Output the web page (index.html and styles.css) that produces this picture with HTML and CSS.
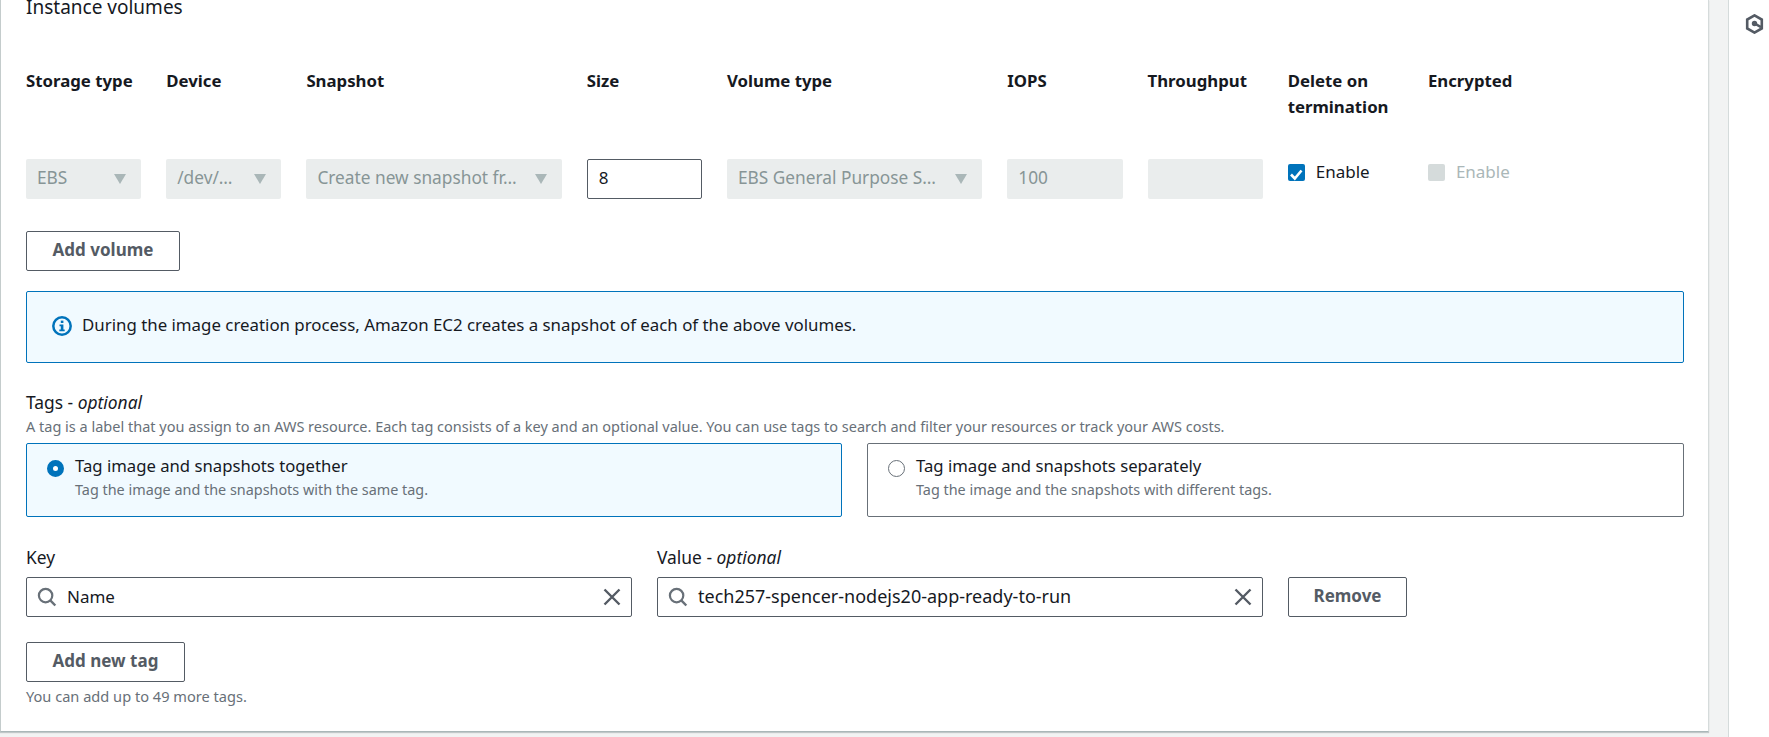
FILE: index.html
```html
<!DOCTYPE html>
<html>
<head>
  <meta charset="utf-8">
  <title>Instance volumes</title>
  <link rel="stylesheet" href="styles.css">
</head>
<body>
  <div class="page">
    <div class="main">
      <div class="card">
        <div class="card-title">Instance volumes</div>

        <!-- volume table -->
        <div class="vol-grid vol-head">
          <div>Storage type</div>
          <div>Device</div>
          <div class="wide">Snapshot</div>
          <div>Size</div>
          <div class="wide">Volume type</div>
          <div>IOPS</div>
          <div>Throughput</div>
          <div>Delete on termination</div>
          <div>Encrypted</div>
        </div>
        <div class="vol-grid vol-row">
          <div class="select"><span class="select-text">EBS</span><span class="arrow"></span></div>
          <div class="select"><span class="select-text">/dev/…</span><span class="arrow"></span></div>
          <div class="select wide"><span class="select-text">Create new snapshot fr…</span><span class="arrow"></span></div>
          <div class="field">8</div>
          <div class="select wide"><span class="select-text">EBS General Purpose S…</span><span class="arrow"></span></div>
          <div class="select"><span class="select-text">100</span></div>
          <div class="select"></div>
          <label class="check">
            <span class="box box-on">
              <svg width="17" height="17" viewBox="0 0 17 17"><path d="M3 8.500l3.800 4L13.500 4.500" fill="none" stroke="#fff" stroke-width="2.600"/></svg>
            </span>
            Enable
          </label>
          <label class="check check-off"><span class="box box-off"></span>Enable</label>
        </div>

        <button class="btn btn-volume">Add volume</button>

        <div class="info">
          <svg class="info-icon" width="20" height="20" viewBox="0 0 20 20">
            <circle cx="10" cy="10" r="8.700" fill="none" stroke="#0073bb" stroke-width="2.500"/>
            <rect x="8.800" y="4.600" width="2.600" height="2.400" fill="#0073bb"/>
            <path d="M7.500 8.500h3.900v5h1.300v1.700H7.300v-1.700h1.500v-3.300H7.500z" fill="#0073bb"/>
          </svg>
          <span class="info-text">During the image creation process, Amazon EC2 creates a snapshot of each of the above volumes.</span>
        </div>

        <div class="tags-label">Tags - <i>optional</i></div>
        <div class="tags-desc">A tag is a label that you assign to an AWS resource. Each tag consists of a key and an optional value. You can use tags to search and filter your resources or track your AWS costs.</div>

        <div class="tiles">
          <div class="tile tile-on">
            <span class="radio radio-on"></span>
            <div>
              <div class="tile-title">Tag image and snapshots together</div>
              <div class="tile-desc">Tag the image and the snapshots with the same tag.</div>
            </div>
          </div>
          <div class="tile">
            <span class="radio"></span>
            <div>
              <div class="tile-title">Tag image and snapshots separately</div>
              <div class="tile-desc">Tag the image and the snapshots with different tags.</div>
            </div>
          </div>
        </div>

        <div class="tag-row">
          <div class="tag-col">
            <div class="tag-label">Key</div>
            <div class="search">
              <svg width="20" height="20" viewBox="0 0 20 20"><circle cx="8.600" cy="8.600" r="6.700" fill="none" stroke="#687078" stroke-width="2.200"/><path d="M13.300 13.300l5 5.200" stroke="#687078" stroke-width="2.400"/></svg>
              <span class="search-text">Name</span>
              <svg width="18" height="18" viewBox="0 0 18 18"><path d="M1.500 1.500l15 15M16.500 1.500l-15 15" stroke="#545b64" stroke-width="2.400"/></svg>
            </div>
          </div>
          <div class="tag-col">
            <div class="tag-label">Value - <i>optional</i></div>
            <div class="search">
              <svg width="20" height="20" viewBox="0 0 20 20"><circle cx="8.600" cy="8.600" r="6.700" fill="none" stroke="#687078" stroke-width="2.200"/><path d="M13.300 13.300l5 5.200" stroke="#687078" stroke-width="2.400"/></svg>
              <span class="search-text search-long">tech257-spencer-nodejs20-app-ready-to-run</span>
              <svg width="18" height="18" viewBox="0 0 18 18"><path d="M1.500 1.500l15 15M16.500 1.500l-15 15" stroke="#545b64" stroke-width="2.400"/></svg>
            </div>
          </div>
          <button class="btn btn-remove">Remove</button>
        </div>

        <button class="btn btn-tag">Add new tag</button>
        <div class="tag-note">You can add up to 49 more tags.</div>
      </div>
    </div>

    <div class="side">
      <svg width="19" height="20" viewBox="0 0 19 20">
        <path d="M9.500 1.400l7.300 4.200v8.800l-7.300 4.200-7.300-4.200V5.600z" fill="none" stroke="#545b64" stroke-width="2.600"/>
        <circle cx="9.500" cy="9.500" r="2.700" fill="#545b64"/>
        <path d="M10.500 10l5.500 3.200" stroke="#545b64" stroke-width="2.600"/>
      </svg>
    </div>
  </div>
</body>
</html>
```

FILE: styles.css
```css
* { box-sizing: border-box; }
html, body { margin: 0; height: 100%; overflow: hidden; }
body {
  font-family: "Noto Sans", sans-serif;
  font-size: 17px;
  color: #16191f;
  background: #fff;
}
.page { display: flex; height: 737px; }
.main {
  width: 1729px;
  padding: 0 19px 5px 0;
  background: #f2f3f3;
  border-right: 1px solid #d5dbdb;
}
.card {
  height: 732px;
  padding: 0 24px 0 26px;
  background: #fff;
  border-left: 1px solid #c4cccc;
  border-right: 1px solid #d5dbdb;
  border-bottom: 1px solid #aab7b8;
  box-shadow: 0 1px 1px rgba(0, 28, 36, .2);
  overflow: hidden;
}
.card-title { margin: -5px 0 0 -1px; line-height: 24px; font-size: 19px; }

/* volume table */
.vol-grid {
  display: grid;
  grid-template-columns: repeat(11, 115.2px);
  column-gap: 25px;
  margin-left: -1px;
}
.wide { grid-column: span 2; }
.vol-head {
  margin-top: 49px;
  height: 91px;
  font-weight: 700;
  font-size: 16.800px;
  line-height: 26px;
}
.vol-row { height: 40px; align-items: stretch; }
.select {
  display: flex;
  align-items: center;
  justify-content: space-between;
  padding: 0 15px 0 11px;
  background: #eaeded;
  border-radius: 2px;
  color: #879596;
}
.select-text { margin-top: -3px; white-space: nowrap; font-size: 17.300px; }
.arrow {
  width: 0;
  height: 0;
  border-left: 6px solid transparent;
  border-right: 6px solid transparent;
  border-top: 10px solid #aab7b8;
}
.field {
  padding: 8px 11px;
  border: 1px solid #545b64;
  border-radius: 2px;
  line-height: 20px;
}
.check { display: flex; align-items: flex-start; gap: 11px; line-height: 26px; }
.check-off { color: #aab7b8; }
.box {
  width: 17px;
  height: 17px;
  margin-top: 5px;
  border-radius: 2px;
}
.box-on { background: #0073bb; }
.box-off { background: #d5dbdb; }

/* buttons */
.btn {
  display: block;
  height: 40px;
  padding: 0 0 3px;
  border: 1px solid #545b64;
  border-radius: 2px;
  background: #fff;
  color: #545b64;
  font-family: inherit;
  font-size: 17px;
  font-weight: 700;
}
.btn-volume { width: 154px; margin: 32px 0 0 -1px; }
.btn-tag { width: 159px; margin: 25px 0 0 -1px; }
.btn-remove { width: 119px; margin-top: 32px; flex: none; }

/* info box */
.info {
  display: flex;
  align-items: center;
  gap: 10px;
  height: 72px;
  margin: 20px 0 0 -1px;
  padding: 0 25px;
  background: #f1faff;
  border: 1px solid #0073bb;
  border-radius: 2px;
  font-size: 16.850px;
}
.info-icon { flex: none; margin-top: -2px; }
.info-text { margin-top: -6px; }

/* tags */
.tags-label { margin: 27px 0 0 -1px; line-height: 24px; font-size: 17.400px; }
.tags-desc { margin: 0 0 0 -1px; font-size: 14.500px; line-height: 24px; color: #687078; }
.tiles { display: flex; gap: 25px; margin: 5px 0 0 -1px; }
.tile {
  flex: 1;
  display: flex;
  gap: 11px;
  height: 74px;
  padding: 10px 20px;
  border: 1px solid #687078;
  border-radius: 2px;
}
.tile-on { flex: none; width: 816px; background: #f1faff; border-color: #0073bb; }
.tile-title { line-height: 24px; font-size: 16.700px; }
.tile-desc { line-height: 24px; font-size: 14.400px; color: #687078; }
.radio {
  flex: none;
  width: 17px;
  height: 17px;
  margin-top: 6px;
  border: 1px solid #687078;
  border-radius: 50%;
}
.radio-on { border: 6px solid #0073bb; background: #fff; }
.tag-row { display: flex; gap: 25px; margin: 28px 0 0 -1px; }
.tag-col { width: 606px; }
.tag-label { line-height: 24px; font-size: 17.400px; margin-bottom: 8px; }
.search {
  display: flex;
  align-items: center;
  height: 40px;
  padding: 0 10px 0 10px;
  border: 1px solid #545b64;
  border-radius: 2px;
}
.search-text { flex: 1; margin: -2px 0 0 10px; font-size: 17px; }
.search-long { font-size: 18px; }
.tag-note { margin: 2px 0 0 -1px; font-size: 14.600px; line-height: 24px; color: #687078; }

/* right rail */
.side { flex: 1; padding: 14px 0 0 16px; background: #fff; }
```
